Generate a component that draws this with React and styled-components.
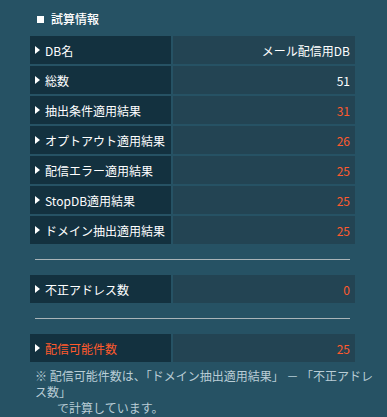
import React from "react";
import styled, { createGlobalStyle } from "styled-components";

const Global = createGlobalStyle`
  html, body {
    margin: 0;
    padding: 0;
    background: #265264;
  }
  body {
    font-family: "Noto Sans CJK JP", "Noto Sans", sans-serif;
    font-size: 12px;
    color: #ffffff;
  }
`;

const Page = styled.div`
  width: 387px;
  height: 417px;
  box-sizing: border-box;
  padding: 11px 0 0 30px;
  background: #265264;
  overflow: hidden;
`;

const Title = styled.div`
  display: flex;
  align-items: center;
  gap: 7px;
  height: 16px;
  line-height: 16px;
  padding-left: 7px;
  font-weight: 500;
  margin-bottom: 9px;
`;

const Square = styled.span`
  width: 7px;
  height: 7px;
  background: #ffffff;
`;

const Table = styled.div`
  width: 325px;
  display: flex;
  flex-direction: column;
  gap: 2px;
`;

const Row = styled.div`
  display: grid;
  grid-template-columns: 141px 182px;
  column-gap: 2px;
  height: 28px;
`;

const Label = styled.div`
  display: flex;
  align-items: center;
  gap: 5px;
  padding-left: 5px;
  background: #13313f;
  color: ${(p) => (p.$accent ? "#ff5a2d" : "#ffffff")};
  white-space: nowrap;
`;

const Arrow = styled.span`
  width: 0;
  height: 0;
  border-left: 5px solid #ffffff;
  border-top: 4px solid transparent;
  border-bottom: 4px solid transparent;
`;

const Value = styled.div`
  display: flex;
  align-items: center;
  justify-content: flex-end;
  padding-right: 5px;
  background: #234453;
  color: ${(p) => (p.$accent ? "#ff5a2d" : "#ffffff")};
  white-space: nowrap;
`;

const Divider = styled.hr`
  width: 315px;
  margin: 15px 0 15px 5px;
  border: none;
  border-top: 1px solid #a9b4b8;
  height: 0;
`;

const Note = styled.div`
  margin-top: 6px;
  margin-left: 5px;
  width: 340px;
  line-height: 16px;
  color: #b9cdd6;
`;

const NoteIndent = styled.div`
  padding-left: 22px;
`;

const rows = [
  { label: "DB名", value: "メール配信用DB" },
  { label: "総数", value: "51" },
  { label: "抽出条件適用結果", value: "31", accent: true },
  { label: "オプトアウト適用結果", value: "26", accent: true },
  { label: "配信エラー適用結果", value: "25", accent: true },
  { label: "StopDB適用結果", value: "25", accent: true },
  { label: "ドメイン抽出適用結果", value: "25", accent: true },
];

function DataRow({ label, value, accent, labelAccent }) {
  return (
    <Row>
      <Label $accent={labelAccent}>
        <Arrow />
        {label}
      </Label>
      <Value $accent={accent}>{value}</Value>
    </Row>
  );
}

export default function App() {
  return (
    <>
      <Global />
      <Page>
        <Title>
          <Square />
          試算情報
        </Title>
        <Table>
          {rows.map((r) => (
            <DataRow key={r.label} {...r} />
          ))}
        </Table>
        <Divider />
        <Table>
          <DataRow label="不正アドレス数" value="0" accent />
        </Table>
        <Divider />
        <Table>
          <DataRow label="配信可能件数" value="25" accent labelAccent />
        </Table>
        <Note>
          ※ 配信可能件数は、「ドメイン抽出適用結果」 － 「不正アドレス数」
          <NoteIndent>で計算しています。</NoteIndent>
        </Note>
      </Page>
    </>
  );
}
